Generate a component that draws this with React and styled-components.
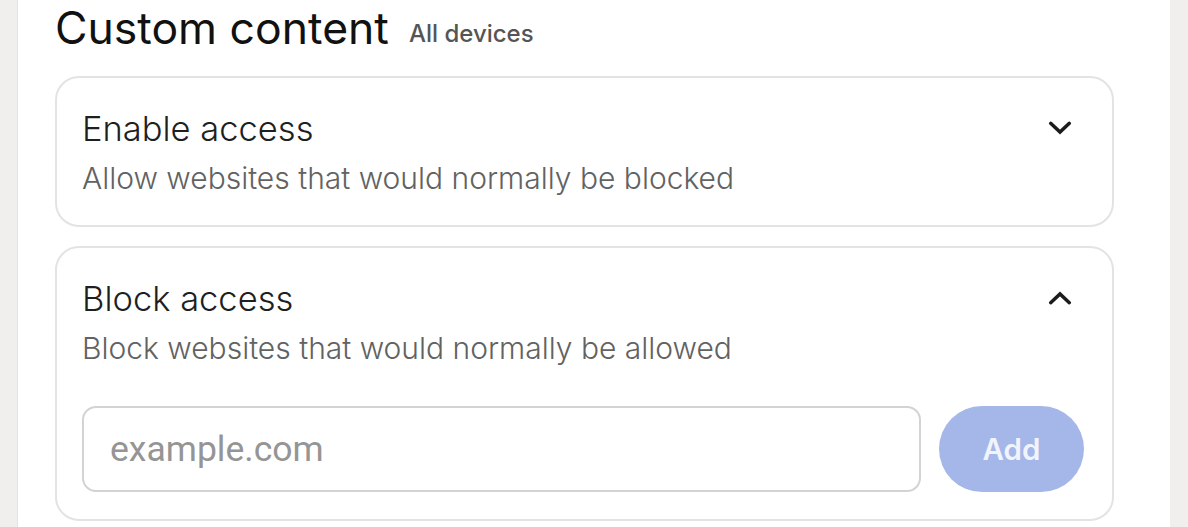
import React from "react";
import styled, { createGlobalStyle } from "styled-components";

const GlobalStyle = createGlobalStyle`
  html, body {
    margin: 0;
    padding: 0;
    background: #f0efed;
    font-family: Inter, "Noto Sans", sans-serif;
  }
  * {
    box-sizing: border-box;
  }
`;

const Page = styled.div`
  display: flex;
  height: 527px;
  padding: 0 18px 0 17px;
  overflow: hidden;
`;

const Panel = styled.section`
  flex: 1;
  background: #fff;
  border-left: 1px solid #e4e3e1;
  padding: 0 56px 0 37px;
  display: flex;
  flex-direction: column;
`;

const Heading = styled.div`
  display: flex;
  align-items: baseline;
  gap: 20px;
  height: 58px;
  padding-top: 4px;

  h1 {
    margin: 0;
    font-size: 44.5px;
    line-height: 48px;
    font-weight: 400;
    color: #111;
  }

  span {
    font-size: 24px;
    font-weight: 500;
    color: #555;
    position: relative;
    top: -2px;
  }
`;

const List = styled.div`
  margin-top: 18px;
  display: flex;
  flex-direction: column;
  gap: 19px;
`;

const Card = styled.div`
  border: 2px solid #e3e3e3;
  border-radius: 24px;
  padding: 31px 28px 27px 25px;
`;

const CardHead = styled.div`
  display: flex;
  justify-content: space-between;
  align-items: flex-start;
`;

const Title = styled.div`
  font-size: 34.5px;
  line-height: 40px;
  font-weight: 300;
  color: #1f1f1f;
`;

const Desc = styled.div`
  margin-top: 9px;
  font-size: 30px;
  line-height: 40px;
  font-weight: 300;
  color: #626262;
`;

const Chevron = styled.svg`
  width: 28px;
  height: 28px;
  margin: 5px 10px 0 0;
  flex-shrink: 0;
`;

const AddRow = styled.div`
  display: flex;
  gap: 18px;
  margin-top: 38px;
`;

const Input = styled.input`
  flex: 1;
  height: 86px;
  border: 2px solid #d3d3d3;
  border-radius: 14px;
  padding: 0 26px;
  font-family: Roboto, "Liberation Sans", sans-serif;
  font-size: 35.5px;
  color: #222;
  outline: none;

  &::placeholder {
    color: #959595;
  }
`;

const AddButton = styled.button`
  width: 145px;
  height: 86px;
  border: none;
  border-radius: 43px;
  background: #a4b7e8;
  color: #f1f4fc;
  font-family: Inter, sans-serif;
  font-size: 29.5px;
  font-weight: 600;
`;

const ChevronIcon = ({ up }) => (
  <Chevron viewBox="0 0 24 24" fill="none">
    <polyline
      points={up ? "4,16 12,8.5 20,16" : "4,8 12,15.5 20,8"}
      stroke="#1c1c1c"
      strokeWidth="3"
      strokeLinecap="round"
      strokeLinejoin="miter"
    />
  </Chevron>
);

const AccessCard = ({ title, desc, open, children }) => (
  <Card>
    <CardHead>
      <div>
        <Title>{title}</Title>
        <Desc>{desc}</Desc>
      </div>
      <ChevronIcon up={open} />
    </CardHead>
    {open && children}
  </Card>
);

export default function App() {
  return (
    <>
      <GlobalStyle />
      <Page>
        <Panel>
          <Heading>
            <h1>Custom content</h1>
            <span>All devices</span>
          </Heading>
          <List>
            <AccessCard
              title="Enable access"
              desc="Allow websites that would normally be blocked"
            />
            <AccessCard
              title="Block access"
              desc="Block websites that would normally be allowed"
              open
            >
              <AddRow>
                <Input placeholder="example.com" />
                <AddButton>Add</AddButton>
              </AddRow>
            </AccessCard>
          </List>
        </Panel>
      </Page>
    </>
  );
}
